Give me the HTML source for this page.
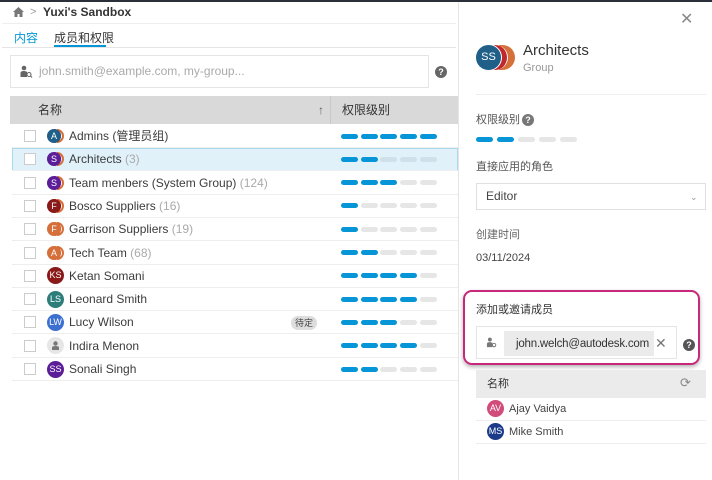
<!DOCTYPE html>
<html><head><meta charset="utf-8"><style>
*{box-sizing:border-box;margin:0;padding:0}
body{width:712px;height:480px;overflow:hidden;background:#fff;font-family:"Liberation Sans","Noto Sans CJK SC",sans-serif;color:#3c3c3c;position:relative;font-size:12px;line-height:14px}
.a{position:absolute;line-height:14px}
.bar{position:absolute;width:17px;height:5px;border-radius:3px;background:#0696d7}
.off{background:#e6e6e6}
.cb{position:absolute;left:24px;width:12px;height:12px;border:1px solid #ccc;background:#fff}
.av{position:absolute;width:17px;height:17px;border-radius:50%;color:#fff;font-size:9px;text-align:center;line-height:17px}
.nm{position:absolute;left:69px;font-size:12px;color:#3c3c3c;line-height:14px}
.cnt{color:#aaa}
</style></head><body>
<div class="a" style="left:0;top:0;width:712px;height:2px;background:#2b2f3a"></div>
<svg class="a" style="left:12px;top:6px" width="13" height="12" viewBox="0 0 13 12"><path d="M6.5 1 L12 6 H10.5 V11 H7.5 V8 H5.5 V11 H2.5 V6 H1 Z" fill="#777"/></svg>
<div class="a" style="left:30px;top:5px;color:#999;font-size:11px">&gt;</div>
<div class="a" style="left:43px;top:5px;font-size:12px;font-weight:bold;color:#333">Yuxi's Sandbox</div>
<div class="a" style="left:2px;top:23px;width:454px;height:1px;background:#eee"></div>
<div class="a" style="left:14px;top:31px;color:#0696d7;font-size:12px">内容</div>
<div class="a" style="left:54px;top:31px;color:#333;font-size:12px">成员和权限</div>
<div class="a" style="left:54px;top:45px;width:52px;height:2px;background:#0696d7"></div>
<div class="a" style="left:2px;top:47px;width:454px;height:1px;background:#e5e5e5"></div>
<div class="a" style="left:10px;top:55px;width:419px;height:33px;border:1px solid #e5e5e5"></div>
<svg class="a" style="left:20px;top:65px" width="13" height="13" viewBox="0 0 13 13"><circle cx="4" cy="3" r="2.3" fill="#666"/><path d="M0.5 12 V8 Q0.5 6 4 6 Q6 6 7 7 V12Z" fill="#666"/><circle cx="9" cy="9.5" r="2" fill="none" stroke="#666" stroke-width="1.1"/><path d="M10.5 11 L12 12.5" stroke="#666" stroke-width="1.1"/></svg>
<div class="a" style="left:39px;top:64px;color:#aaa;font-size:12px">john.smith@example.com, my-group...</div>
<div class="a" style="left:435px;top:66px;width:12px;height:12px;border-radius:50%;background:#666;color:#fff;font-size:9px;font-weight:bold;text-align:center;line-height:12px">?</div>
<div class="a" style="left:10px;top:96px;width:448px;height:28px;background:#d9d9d9"></div>
<div class="a" style="left:330px;top:96px;width:1px;height:28px;background:#c8c8c8"></div>
<div class="a" style="left:38px;top:103px;font-size:12px;color:#333">名称</div>
<div class="a" style="left:318px;top:103px;font-size:12px;color:#666">↑</div>
<div class="a" style="left:342px;top:103px;font-size:12px;color:#333">权限级别</div>

<div class="a" style="left:12px;top:148px;width:446px;height:23px;background:#e0f1fa;border:1px solid #a9d8ef"></div>

<div id="rows"></div>
<script>
var R=[["Admins (管理员组)","","#1f5f88","A",5,1],["Architects","(3)","#5b1e98","S",2,1],["Team menbers (System Group)","(124)","#5b1e98","S",3,1],["Bosco Suppliers","(16)","#8a1a1a","F",1,1],["Garrison Suppliers","(19)","#d6703a","F",1,1],["Tech Team","(68)","#d6703a","A",2,1],["Ketan Somani","","#8a1a1a","KS",4,0],["Leonard Smith","","#2d7e7a","LS",4,0],["Lucy Wilson","","#3b6fd0","LW",3,0],["Indira Menon","","#e6e6e6","",4,0],["Sonali Singh","","#5b1e98","SS",2,0]];
var h="";
R.forEach(function(r,i){var c=136+i*23.3;
h+='<div class="a" style="left:12px;top:'+(c+11)+'px;width:446px;height:1px;background:#eee"></div>';
h+='<div class="cb" style="top:'+(c-6)+'px"></div>';
if(r[5]){h+='<div class="av" style="left:57px;top:'+(c-7)+'px;width:7px;height:14px;border-radius:0 7px 7px 0;background:none;border:2px solid #d6703a;border-left:none"></div><div class="av" style="left:54px;top:'+(c-7)+'px;width:7px;height:14px;border-radius:0 7px 7px 0;background:none;border:2px solid #c0282d;border-left:none"></div><div class="av" style="left:47px;top:'+(c-7)+'px;width:14px;height:14px;line-height:14px;background:'+r[2]+'">'+r[3]+'</div>';}
else if(r[3]){h+='<div class="av" style="left:47px;top:'+(c-8.5)+'px;background:'+r[2]+'">'+r[3]+'</div>';}
else{h+='<div class="av" style="left:47px;top:'+(c-8.5)+'px;background:#e6e6e6"><svg width="17" height="17"><circle cx="8.5" cy="6.5" r="2.2" fill="#777"/><path d="M5 13 V10.5 Q5 9 8.5 9 Q12 9 12 10.5 V13Z" fill="#777"/></svg></div>';}
h+='<div class="nm" style="top:'+(c-7)+'px">'+r[0]+' <span class="cnt">'+r[1]+'</span></div>';
for(var k=0;k<5;k++){h+='<div class="bar'+(k<r[4]?'':' off')+'" style="left:'+(341+k*19.7)+'px;top:'+(c-2.5)+'px'+(k>=r[4]&&i==1?';background:#cfe0ea':'')+'"></div>';}
});
document.getElementById("rows").innerHTML=h;
</script>
<div class="a" style="left:291px;top:316px;width:26px;height:14px;border-radius:7px;background:#ddd;font-size:9px;text-align:center;line-height:14px;color:#444">待定</div>

<div class="a" style="left:458px;top:2px;width:1px;height:478px;background:#e5e5e5"></div>
<div class="a" style="left:680px;top:13px;font-size:16px;color:#888">✕</div>
<div class="a" style="left:499px;top:45px;width:16px;height:25px;border-radius:0 13px 13px 0;background:#d6703a"></div>
<div class="a" style="left:492px;top:45px;width:16px;height:25px;border-radius:0 13px 13px 0;background:#c0282d;border-right:1px solid #fff"></div>
<div class="a" style="left:475px;top:44px;width:27px;height:27px;border-radius:50%;background:#1f5f88;color:#fff;font-size:11px;text-align:center;line-height:25px;border:1px solid #fff">SS</div>
<div class="a" style="left:523px;top:42px;font-size:15px;line-height:17px;color:#333">Architects</div>
<div class="a" style="left:523px;top:61px;font-size:11px;color:#999">Group</div>
<div class="a" style="left:476px;top:94px;width:230px;height:1px;background:#eee"></div>
<div class="a" style="left:476px;top:113px;font-size:11px;color:#555">权限级别</div>
<div class="a" style="left:522px;top:114px;width:12px;height:12px;border-radius:50%;background:#777;color:#fff;font-size:9px;font-weight:bold;text-align:center;line-height:12px">?</div>
<div class="bar" style="left:476px;top:137px"></div><div class="bar" style="left:497px;top:137px"></div><div class="bar off" style="left:518px;top:137px"></div><div class="bar off" style="left:539px;top:137px"></div><div class="bar off" style="left:560px;top:137px"></div>
<div class="a" style="left:476px;top:160px;font-size:11px;color:#555">直接应用的角色</div>
<div class="a" style="left:476px;top:183px;width:230px;height:27px;border:1px solid #e0e0e0"></div>
<div class="a" style="left:486px;top:189px;font-size:12px;color:#444">Editor</div>
<div class="a" style="left:690px;top:190px;font-size:9px;color:#999">⌄</div>
<div class="a" style="left:476px;top:228px;font-size:11px;color:#666">创建时间</div>
<div class="a" style="left:476px;top:251px;font-size:11px;color:#444">03/11/2024</div>
<div class="a" style="left:463px;top:290px;width:237px;height:75px;border:2px solid #c8287a;border-radius:9px;box-shadow:0 2px 4px rgba(0,0,0,.3)"></div>
<div class="a" style="left:476px;top:303px;font-size:11px;color:#333">添加或邀请成员</div>
<div class="a" style="left:476px;top:326px;width:201px;height:33px;border:1px solid #e5e5e5"></div>
<svg class="a" style="left:486px;top:337px" width="12" height="11" viewBox="0 0 13 13"><circle cx="4" cy="3" r="2.3" fill="#777"/><path d="M0.5 12 V8 Q0.5 6 4 6 Q6 6 7 7 V12Z" fill="#777"/><circle cx="9" cy="9.5" r="2" fill="none" stroke="#777" stroke-width="1.1"/></svg>
<div class="a" style="left:504px;top:331px;width:150px;height:25px;background:#ebebeb"></div>
<div class="a" style="left:516px;top:337px;font-size:11.5px;color:#333;letter-spacing:-0.2px">john.welch@autodesk.com</div>
<div class="a" style="left:655px;top:336px;font-size:14px;color:#777">✕</div>
<div class="a" style="left:683px;top:339px;width:12px;height:12px;border-radius:50%;background:#555;color:#fff;font-size:9px;font-weight:bold;text-align:center;line-height:12px">?</div>
<div class="a" style="left:476px;top:370px;width:230px;height:28px;background:#ebebeb"></div>
<div class="a" style="left:487px;top:377px;font-size:11px;color:#333">名称</div>
<div class="a" style="left:680px;top:376px;font-size:13px;color:#888">⟳</div>
<div class="av" style="left:487px;top:400px;background:#d14c7a">AV</div>
<div class="a" style="left:509px;top:402px;font-size:11px;color:#444">Ajay Vaidya</div>
<div class="a" style="left:476px;top:420px;width:230px;height:1px;background:#eee"></div>
<div class="av" style="left:487px;top:423px;background:#1b3b8a">MS</div>
<div class="a" style="left:509px;top:425px;font-size:11px;color:#444">Mike Smith</div>
<div class="a" style="left:476px;top:443px;width:230px;height:1px;background:#eee"></div>
</body></html>
